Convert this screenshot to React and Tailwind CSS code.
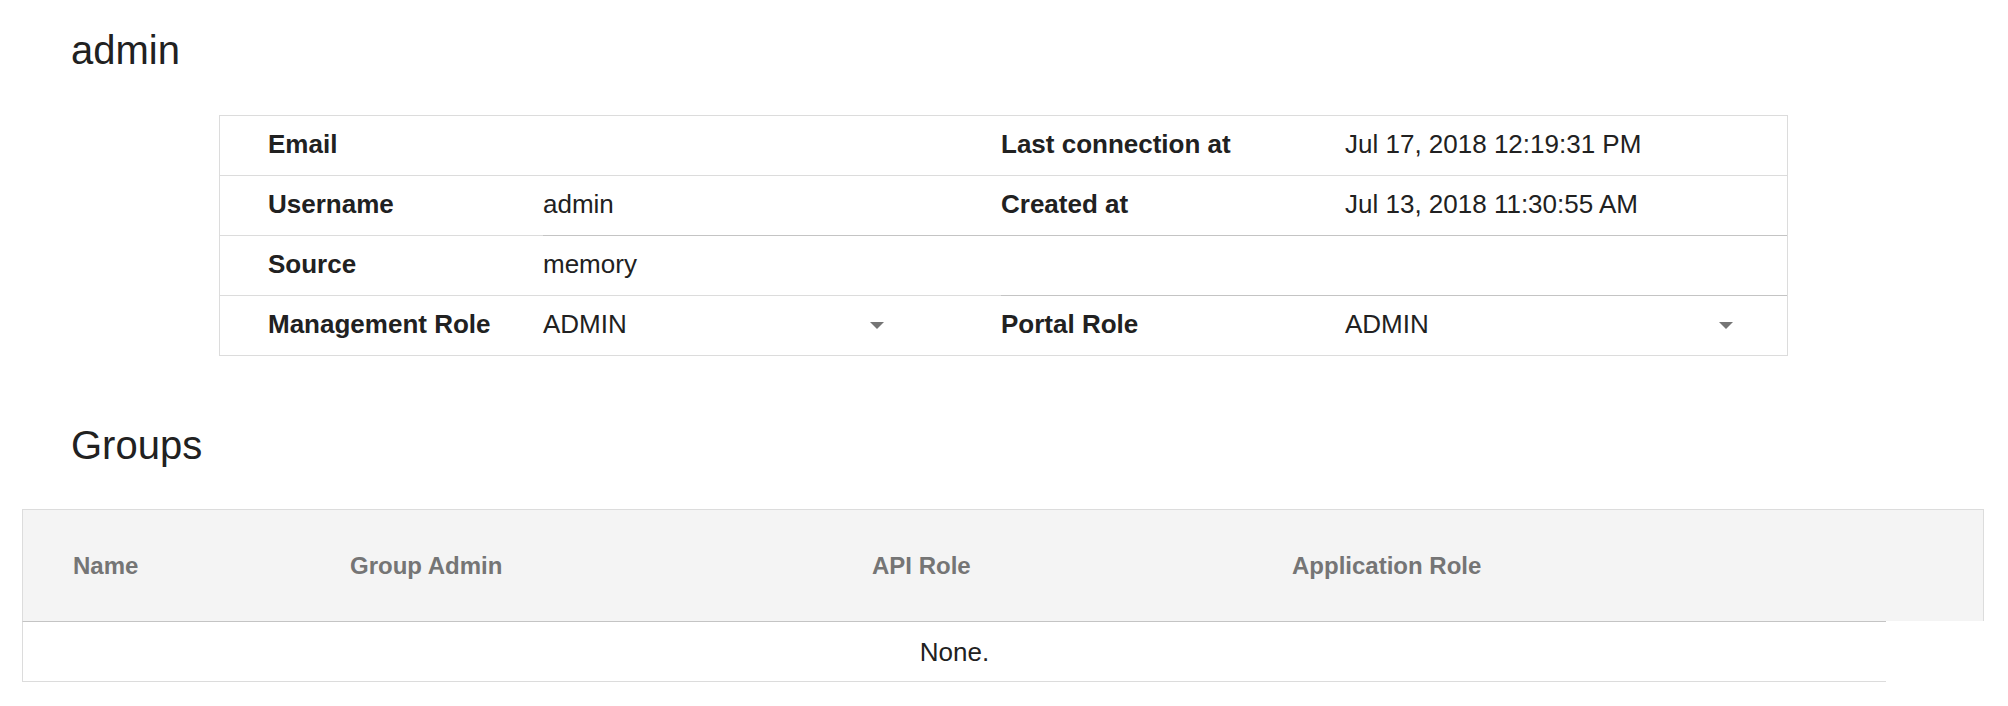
import React from 'react';

const rows = [
    { label: 'Email', value: '', label2: 'Last connection at', value2: 'Jul 17, 2018 12:19:31 PM' },
    { label: 'Username', value: 'admin', label2: 'Created at', value2: 'Jul 13, 2018 11:30:55 AM', dark: 1 },
    { label: 'Source', value: 'memory', label2: '', value2: '', dark: 2 },
    { label: 'Management Role', value: 'ADMIN', select: true, label2: 'Portal Role', value2: 'ADMIN', select2: true }
];

function Caret() {
    return (
        <svg width="14" height="7" viewBox="0 0 14 7" className="shrink-0">
            <path d="M0 0 L14 0 L7 7 Z" fill="#757575" />
        </svg>
    );
}

export default function App() {
    return (
        <div className="min-h-[706px] bg-white font-['Liberation_Sans',Arial,sans-serif] text-[#212121]">
            {/* User header */}
            <h1 className="pt-[30px] pl-[71px] text-[40px] leading-[40px] font-normal">admin</h1>

            {/* Details table */}
            <div className="mt-[45px] ml-[219px] w-[1569px] border-t border-x border-[#dcdcdc]">
                {rows.map((row, i) => (
                    <div key={i} className="grid grid-cols-[323px_458px_344px_1fr] text-[26px] leading-[26px]">
                        <div className="h-[60px] pl-[48px] pb-[3px] flex items-center font-bold border-b border-[#dcdcdc]">
                            {row.label}
                        </div>
                        <div className={`h-[60px] pb-[3px] flex items-center border-b ${row.dark === 1 ? 'border-[#c4c4c4]' : 'border-[#dcdcdc]'}`}>
                            {row.select ? (
                                <div className="w-[341px] pt-[3px] flex items-center justify-between">
                                    <span className="-mt-[3px]">{row.value}</span>
                                    <Caret />
                                </div>
                            ) : (
                                row.value
                            )}
                        </div>
                        <div className={`h-[60px] pb-[3px] flex items-center font-bold border-b ${row.dark ? 'border-[#c4c4c4]' : 'border-[#dcdcdc]'}`}>
                            {row.label2}
                        </div>
                        <div className={`h-[60px] pb-[3px] flex items-center border-b ${row.dark ? 'border-[#c4c4c4]' : 'border-[#dcdcdc]'}`}>
                            {row.select2 ? (
                                <div className="w-[388px] pt-[3px] flex items-center justify-between">
                                    <span className="-mt-[3px]">{row.value2}</span>
                                    <Caret />
                                </div>
                            ) : (
                                row.value2
                            )}
                        </div>
                    </div>
                ))}
            </div>

            {/* Groups */}
            <h2 className="mt-[69px] pl-[71px] text-[40px] leading-[40px] font-normal">Groups</h2>

            <div className="mt-[44px] ml-[22px]">
                <div className="w-[1962px] h-[112px] bg-[#f4f4f4] border-t border-x border-[#dcdcdc] flex items-center pt-[1px] text-[24px] leading-[24px] font-bold text-[#757575]">
                    <div className="w-[327px] pl-[50px]">Name</div>
                    <div className="w-[522px]">Group Admin</div>
                    <div className="w-[420px]">API Role</div>
                    <div className="flex-1">Application Role</div>
                </div>
                <div className="w-[1864px] h-[61px] border-t border-t-[#c4c4c4] border-l border-b border-l-[#dcdcdc] border-b-[#dcdcdc] flex items-center justify-center text-[26px] leading-[26px]">
                    None.
                </div>
            </div>
        </div>
    );
}
